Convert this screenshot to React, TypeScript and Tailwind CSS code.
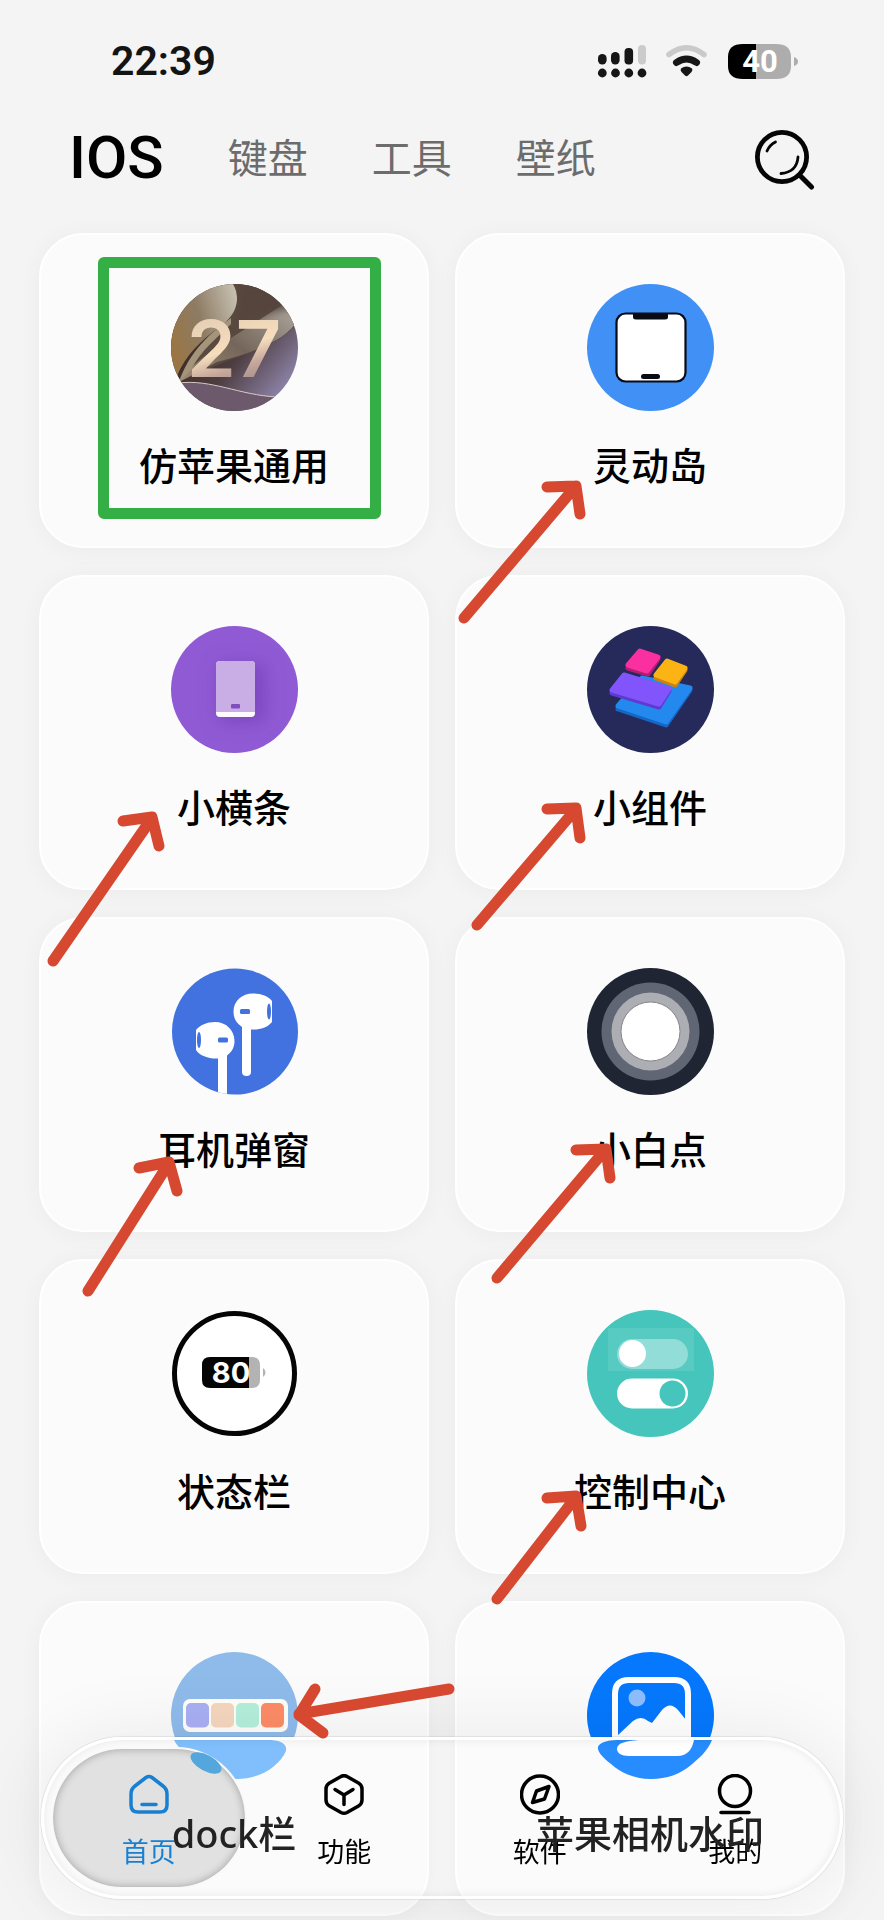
import type { ReactNode } from "react";
import clsx from "clsx";

const tabs = ["IOS", "键盘", "工具", "壁纸"];

function Icon({ children }: { children: ReactNode }) {
  return (
    <svg viewBox="0 0 127 127" className="size-[127px]" aria-hidden="true">
      {children}
    </svg>
  );
}

function WallpaperIcon() {
  return (
    <Icon>
      <defs>
        <clipPath id="wp-clip">
          <circle cx="63.5" cy="63.5" r="63.5" />
        </clipPath>
        <filter id="wp-soft" x="-20%" y="-20%" width="140%" height="140%">
          <feGaussianBlur stdDeviation="4" />
        </filter>
        <linearGradient id="wp-gold" x1="0" y1="0.6" x2="1" y2="0.2">
          <stop offset="0" stopColor="#9a7646" />
          <stop offset="0.45" stopColor="#8d7b63" />
          <stop offset="1" stopColor="#c4bdae" />
        </linearGradient>
        <linearGradient id="wp-fold" x1="0" y1="1" x2="1" y2="0">
          <stop offset="0" stopColor="#a08d72" />
          <stop offset="0.45" stopColor="#74665a" />
          <stop offset="1" stopColor="#b8b2ab" />
        </linearGradient>
        <linearGradient id="wp-dusk" x1="0.3" y1="0.3" x2="0.9" y2="0.8">
          <stop offset="0" stopColor="#3d2c28" />
          <stop offset="0.45" stopColor="#4d3d40" />
          <stop offset="1" stopColor="#8a80a4" />
        </linearGradient>
        <linearGradient id="wp-num" x1="0" y1="0" x2="0.3" y2="1">
          <stop offset="0" stopColor="#dcc6b0" />
          <stop offset="0.6" stopColor="#f6ddbd" />
          <stop offset="0.8" stopColor="#c4a69a" />
          <stop offset="1" stopColor="#a38d8d" />
        </linearGradient>
      </defs>
      <g clipPath="url(#wp-clip)">
        <rect width="127" height="127" fill="url(#wp-dusk)" />
        <path d="M60 0H127V38C112 56 92 66 58 76L8 98C20 70 62 50 66 10Z" fill="#594940" />
        <path d="M127 36C116 54 92 66 46 78L8 98C24 72 76 46 127 10Z" fill="url(#wp-fold)" />
        <path d="M70 0H127V22C106 26 90 30 66 44Z" fill="#54443c" filter="url(#wp-soft)" />
        <path d="M0 0H62C70 14 66 30 50 42C30 56 14 72 6 92L0 80Z" fill="url(#wp-gold)" />
        <path d="M60 34C40 48 18 68 8 98L20 86C30 66 46 54 60 40Z" fill="#a3947a" />
        <path d="M8 99C40 95 70 112 106 113L90 127H40Z" fill="#6c5a6c" />
        <path d="M8 99C40 95 68 111 106 113" fill="none" stroke="#d9c8c4" strokeWidth="1" />
        <text
          x="63"
          y="93"
          textAnchor="middle"
          fontSize="79"
          className="font-['Inter'] font-semibold"
          fill="url(#wp-num)"
        >
          27
        </text>
      </g>
    </Icon>
  );
}

function IslandIcon() {
  return (
    <Icon>
      <circle cx="63.5" cy="63.5" r="63.5" fill="#4190f5" />
      <rect x="29.5" y="29.5" width="69" height="68" rx="9" fill="#fff" stroke="#070b14" strokeWidth="2.2" />
      <path d="M46 29H81V33Q81 35.5 78 35.5H49Q46 35.5 46 33Z" fill="#070b14" />
      <rect x="54" y="90" width="19" height="5" rx="2.5" fill="#070b14" />
    </Icon>
  );
}

function HomeBarIcon() {
  return (
    <Icon>
      <defs>
        <filter id="bar-blur" x="-50%" y="-50%" width="200%" height="200%">
          <feGaussianBlur stdDeviation="9" />
        </filter>
      </defs>
      <circle cx="63.5" cy="63.5" r="63.5" fill="#8f5ad4" />
      <rect x="48" y="38" width="46" height="58" rx="5" fill="#7c46bf" filter="url(#bar-blur)" />
      <rect x="45" y="35" width="39" height="56" rx="4" fill="#fdfaff" />
      <path d="M49 35H80Q84 35 84 39V86H45V39Q45 35 49 35Z" fill="#c8aee5" />
      <rect x="60" y="78" width="9" height="4.5" rx="1" fill="#7f4fbd" />
    </Icon>
  );
}

function WidgetIcon() {
  return (
    <Icon>
      <circle cx="63.5" cy="63.5" r="63.5" fill="#262a5a" />
      <g strokeLinejoin="round" strokeWidth="5">
        <path d="M55 54L103 64L79 99L31 83Z" fill="#1667c4" stroke="#1667c4" />
        <path d="M55 52L103 62L79 96L31 80Z" fill="#2389ee" stroke="#2389ee" />
        <path d="M37 51L82 65L72 81L25 67Z" fill="#5d3ad0" stroke="#5d3ad0" />
        <path d="M37 49L82 63L72 78L25 64Z" fill="#8155fb" stroke="#8155fb" />
        <path d="M53 27L71 33L61 48L41 42Z" fill="#b31d74" stroke="#b31d74" />
        <path d="M53 25L71 31L60 45L41 39Z" fill="#fa2fa0" stroke="#fa2fa0" />
        <path d="M80 37L98 44L88 59L69 52Z" fill="#cc8212" stroke="#cc8212" />
        <path d="M80 35L98 42L88 56L69 49Z" fill="#fcb314" stroke="#fcb314" />
      </g>
    </Icon>
  );
}

function EarbudsIcon() {
  return (
    <Icon>
      <defs>
        <clipPath id="buds-clip">
          <circle cx="64" cy="63.5" r="63" />
        </clipPath>
      </defs>
      <g clipPath="url(#buds-clip)">
        <rect width="127" height="127" fill="#4271e0" />
        <path
          d="M101 33V54C96 60 88 62 80 61.5V104Q80 108 75.500 108Q71 108 71 104V59C65 55 62.500 50 62.500 43.500C62.500 33 71 25.500 82 25.500C90 25.500 97 28 101 33Z"
          fill="#fff"
        />
        <ellipse cx="98" cy="43.500" rx="2" ry="8" fill="#4271e0" />
        <rect x="69" y="41" width="10" height="5" rx="1.500" fill="#4271e0" />
        <path
          d="M25 62C29 57 36 54 44 54C55 54 63.500 62 63.500 73C63.500 79 61 84 56 87.500V127H47V90.500C38 91 29 88 25 82Z"
          fill="#fff"
        />
        <ellipse cx="28" cy="72" rx="2" ry="8" fill="#4271e0" />
        <rect x="47" y="69.500" width="10" height="5" rx="1.500" fill="#4271e0" />
      </g>
    </Icon>
  );
}

function TouchDotIcon() {
  return (
    <Icon>
      <circle cx="63.5" cy="63.5" r="63.5" fill="#202534" />
      <circle cx="63.5" cy="63.5" r="49" fill="#616674" />
      <circle cx="63.5" cy="63.5" r="39" fill="#adaeb3" />
      <circle cx="63.5" cy="63.5" r="29.5" fill="#fff" stroke="#85868b" strokeWidth="1" />
    </Icon>
  );
}

function StatusBarIcon() {
  return (
    <Icon>
      <circle cx="63.5" cy="63.5" r="60" fill="#fff" stroke="#050505" strokeWidth="5" />
      <path d="M39 47H78V78H39Q31 78 31 70V55Q31 47 39 47Z" fill="#050505" />
      <path d="M78 47H81Q89 47 89 55V70Q89 78 81 78H78Z" fill="#b3b3b3" />
      <path d="M92 58Q94.500 59.500 94.500 62.500Q94.500 65.500 92 67Z" fill="#b3b3b3" />
      <text
        x="60"
        y="73"
        textAnchor="middle"
        fontSize="29"
        className="font-['Inter'] font-bold"
        fill="#fff"
      >
        80
      </text>
    </Icon>
  );
}

function TogglesIcon() {
  return (
    <Icon>
      <circle cx="63.5" cy="63.5" r="63.5" fill="#45c5bb" />
      <path d="M21 18H107V61H21Z" fill="#fff" fillOpacity="0.1" />
      <rect x="30" y="29" width="71" height="30" rx="15" fill="#fff" fillOpacity="0.36" />
      <circle cx="45.5" cy="43.500" r="13.5" fill="#fff" />
      <rect x="30" y="68.500" width="71" height="30" rx="15" fill="#fff" />
      <circle cx="85.5" cy="83.5" r="13" fill="#45c5bb" />
    </Icon>
  );
}

function DockIcon() {
  return (
    <Icon>
      <path d="M4.500 87A63.500 63.500 0 1 1 122.500 87Z" fill="#8fbbeb" />
      <rect x="12" y="47" width="105" height="33" rx="7" fill="#fffdf8" />
      <rect x="15" y="51" width="23" height="24.500" rx="5" fill="#a9aff4" />
      <rect x="40" y="51" width="23" height="24.500" rx="5" fill="#f5d6be" />
      <rect x="65" y="51" width="23" height="24.500" rx="5" fill="#b4efdb" />
      <rect x="90" y="51" width="23" height="24.500" rx="5" fill="#fd8c67" />
      <path
        d="M3 88H100C112 89 116 93 115 99C108 115 88 127 66 127C45 127 30 118 20 108C12 100 6 94 3 88Z"
        fill="#6ab4fc"
      />
    </Icon>
  );
}

function PhotoIcon() {
  return (
    <Icon>
      <path d="M4.500 87A63.500 63.500 0 1 1 122.500 87Z" fill="#0578fd" />
      <path d="M28 87V42Q28 28 42 28H87Q101 28 101 42V87" fill="none" stroke="#fff" strokeWidth="6" />
      <circle cx="50" cy="46" r="8.500" fill="#8dbeff" />
      <path
        d="M30 87V84L46 69Q54 63 61 69L65 71L75 58Q83 49 91 58L99 68V87Z"
        fill="#fff"
      />
      <path
        d="M30 88H125C120 100 112 106 104 113C93 122 80 127 64 127C46 127 33 120 24 112C15 105 10 99 11 95C12 91 20 88 30 88Z"
        fill="#0078ff"
      />
      <path d="M52 88H107C105 98 100 104 90 104H42C34 104 30 101 30 97C30 91 38 89 52 88Z" fill="#fff" />
    </Icon>
  );
}

const features = [
  { label: "仿苹果通用", icon: <WallpaperIcon />, highlighted: true },
  { label: "灵动岛", icon: <IslandIcon /> },
  { label: "小横条", icon: <HomeBarIcon /> },
  { label: "小组件", icon: <WidgetIcon /> },
  { label: "耳机弹窗", icon: <EarbudsIcon /> },
  { label: "小白点", icon: <TouchDotIcon /> },
  { label: "状态栏", icon: <StatusBarIcon /> },
  { label: "控制中心", icon: <TogglesIcon /> },
  { label: "dock栏", icon: <DockIcon />, behindNav: true },
  { label: "苹果相机水印", icon: <PhotoIcon />, behindNav: true },
];

const arrows = [
  "M464 618L576 486M547 487L576 486L580 514",
  "M53 961L152 818M123 821L152 817L159 846",
  "M477 925L576 809M547 809L576 808L580 838",
  "M88 1291L169 1163M139 1168L169 1162L177 1191",
  "M497 1278L606 1149M576 1150L606 1149L610 1178",
  "M497 1599L576 1497M547 1498L576 1496L581 1526",
  "M449 1689L299 1714M315 1689L299 1715L323 1733",
];

const navItems = [
  {
    label: "首页",
    icon: (
      <>
        <path d="M20 2.500Q21.500 2.500 23 3.500L34 12Q38 15 38 20V31Q38 38 31 38H9Q2 38 2 31V20Q2 15 6 12L17 3.500Q18.500 2.500 20 2.500Z" />
        <path d="M13 30.500H27" />
      </>
    ),
  },
  {
    label: "功能",
    icon: (
      <>
        <path d="M17 2.500Q20 0.800 23 2.500L34.500 9Q38 11 38 15V26Q38 30 34.500 32L23 38.500Q20 40 17 38.500L5.500 32Q2 30 2 26V15Q2 11 5.500 9Z" />
        <path d="M11 15.500L20 21L29 15.500M20 21V30.500" />
      </>
    ),
  },
  {
    label: "软件",
    icon: (
      <>
        <circle cx="20" cy="20.500" r="18.500" />
        <path d="M29 12.500L24.500 25L12.500 28.500L16.500 17Z" />
      </>
    ),
  },
  {
    label: "我的",
    icon: (
      <>
        <circle cx="20" cy="17" r="15.500" />
        <path d="M6 38.500H34" />
      </>
    ),
  },
];

function StatusBar() {
  return (
    <div className="flex h-[122px] items-center justify-between pr-[86px] pl-[111px]">
      <span className="font-['Roboto'] text-[41px] leading-[40px] font-semibold text-[#141414]">22:39</span>
      <svg viewBox="0 0 202 40" className="h-10 w-[202px]" role="img" aria-label="信号和电量 40">
        <g fill="#161616">
          <rect x="2" y="13" width="8.600" height="10.500" rx="4.200" />
          <rect x="15" y="11" width="8.600" height="12.500" rx="4.200" />
          <rect x="28.500" y="7" width="8.600" height="16.500" rx="4" />
          <rect x="42" y="4" width="8" height="19.500" rx="4" fill="#cbcbcb" />
          <circle cx="6.300" cy="32" r="4.400" />
          <circle cx="19.500" cy="32" r="4.400" />
          <circle cx="32.800" cy="32" r="4.400" />
          <circle cx="46" cy="32" r="4.400" />
        </g>
        <path d="M73 13.500Q90.500 0 108 13.500" fill="none" stroke="#cacaca" strokeWidth="5.500" strokeLinecap="round" />
        <path d="M80.500 21.500Q90.500 14.500 100.500 21.500" fill="none" stroke="#161616" strokeWidth="7" strokeLinecap="round" />
        <path d="M85 27.500Q90.500 23.500 96 27.500Q97 29 95.500 31L92 34.500Q90.500 36 89 34.500L85.500 31Q84 29 85 27.500Z" fill="#161616" />
        <path d="M147 3H160V38H147Q132 38 132 25V16Q132 3 147 3Z" fill="#000" />
        <path d="M160 3H180Q195 3 195 16V25Q195 38 180 38H160Z" fill="#adadad" />
        <path d="M198 16Q202 17.500 202 20.500Q202 23.500 198 25Z" fill="#adadad" />
        <text
          x="164"
          y="31"
          textAnchor="middle"
          fontSize="31"
          className="font-['Roboto'] font-bold"
          fill="#fff"
        >
          40
        </text>
      </svg>
    </div>
  );
}

function Header() {
  return (
    <header className="flex h-[72px] items-center justify-between pr-[68px] pl-[69px]">
      <div className="flex items-center gap-[64px]">
        {tabs.map((tab, i) => (
          <button
            key={tab}
            type="button"
            className={clsx(
              "leading-[60px]",
              i === 0
                ? "font-['Roboto'] text-[60px] font-medium text-black"
                : "text-[40px] text-[#6c6c6c]"
            )}
          >
            {tab}
          </button>
        ))}
      </div>
      <button type="button" aria-label="搜索">
        <svg
          viewBox="0 0 64 64"
          className="size-16"
          fill="none"
          stroke="#050505"
          strokeLinecap="round"
        >
          <circle cx="30" cy="31" r="24.600" strokeWidth="4.800" />
          <path d="M48 49.500L59.500 61" strokeWidth="5" />
          <path d="M15 25Q17.500 19 23.500 16M46 31Q45 46 29 47.500" strokeWidth="2.800" />
        </svg>
      </button>
    </header>
  );
}

function BottomNav() {
  return (
    <nav className="fixed inset-x-[41px] bottom-[21px] z-10 grid grid-cols-4 rounded-full border-[3px] border-white bg-white/15 p-[7px] shadow-[0_0_70px_10px_rgba(0,0,0,0.06),inset_0_0_10px_rgba(0,0,0,0.08),0_0_2px_rgba(0,0,0,0.25)]">
      {navItems.map((item, i) => (
        <a
          key={item.label}
          href="#"
          className={clsx(
            "relative flex h-[142px] flex-col items-center justify-center gap-[18px] rounded-full pt-2",
            i === 0
              ? "border-2 border-white/80 bg-[#e1e1e1] text-[#1880d2] shadow-[inset_0_0_8px_rgba(0,0,0,0.3)]"
              : "text-black"
          )}
        >
          {i === 0 && (
            <svg viewBox="0 0 34 24" className="absolute top-[2px] right-[22px] w-[34px]" aria-hidden="true">
              <ellipse cx="17" cy="12" rx="17" ry="8" transform="rotate(28 17 12)" fill="#53a7dc" />
            </svg>
          )}
          <svg
            viewBox="0 0 40 42"
            className="h-[42px] w-10"
            fill="none"
            stroke="currentColor"
            strokeWidth="3.500"
            strokeLinecap="round"
            strokeLinejoin="round"
            aria-hidden="true"
          >
            {item.icon}
          </svg>
          <span className="text-[27px] leading-[36px]">{item.label}</span>
        </a>
      ))}
    </nav>
  );
}

export default function App() {
  return (
    <div className="relative min-h-screen overflow-hidden bg-[#f4f4f4] pb-1 font-['Noto_Sans','Noto_Sans_CJK_SC',sans-serif]">
      <StatusBar />
      <Header />
      <main className="grid grid-cols-2 gap-x-[26px] gap-y-[27px] px-[39px] pt-[39px]">
        {features.map((feature) => (
          <a
            key={feature.label}
            href="#"
            className="relative flex h-[315px] flex-col items-center gap-[30px] rounded-[44px] border-2 border-white bg-[#fbfbfb] pt-[49px] shadow-[0_2px_24px_rgba(0,0,0,0.04)]"
          >
            {feature.highlighted && (
              <span className="absolute top-[22px] left-[57px] h-[262px] w-[283px] rounded-md border-[11px] border-[#34af46]" />
            )}
            {feature.icon}
            <span
              className={clsx(
                "relative z-20 text-[38px] leading-[48px] font-medium",
                feature.behindNav ? "text-[#222222]" : "text-black"
              )}
            >
              {feature.label}
            </span>
          </a>
        ))}
      </main>
      <BottomNav />
      <svg
        viewBox="0 0 884 1920"
        className="pointer-events-none absolute inset-x-0 top-0 z-30 w-full"
        fill="none"
        stroke="#d64830"
        strokeWidth="11"
        strokeLinecap="round"
        strokeLinejoin="round"
        aria-hidden="true"
      >
        {arrows.map((d) => (
          <path key={d} d={d} />
        ))}
      </svg>
    </div>
  );
}
